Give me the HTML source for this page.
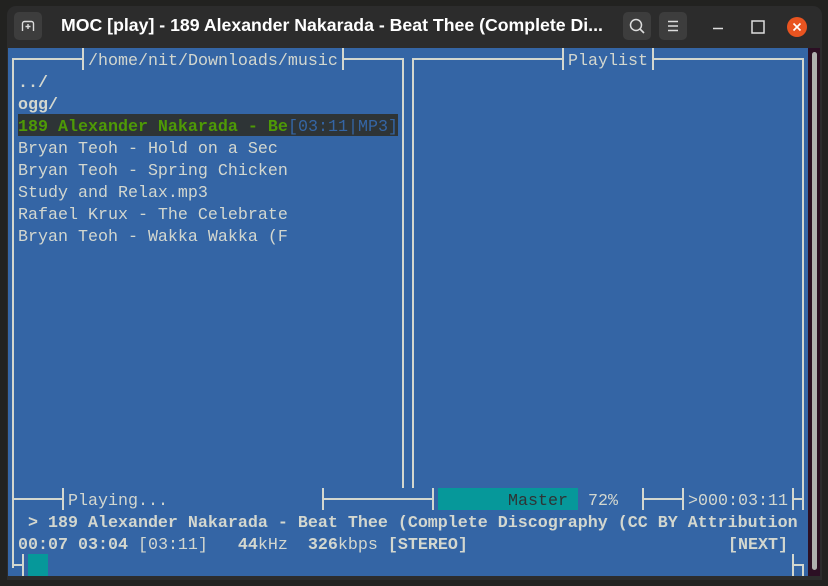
<!DOCTYPE html>
<html><head><meta charset="utf-8"><style>
*{margin:0;padding:0;box-sizing:border-box}
body{width:828px;height:586px;background:#222220;position:relative;overflow:hidden;font-family:"Liberation Mono",monospace}
#win{position:absolute;left:7px;top:6px;width:815px;height:574px;background:#2c2c2c;border-radius:9px 9px 0 0}
#term{position:absolute;left:8px;top:48px;width:800px;height:528px;background:#3465a5}
#sb{position:absolute;left:808px;top:48px;width:12px;height:528px;background:#2c0f24}
#thumb{position:absolute;left:812px;top:52px;width:5px;height:518px;background:#b0b0b0;border-radius:3px}
.t{position:absolute;font-size:16.67px;line-height:22px;color:#d3d7cf;white-space:pre;height:22px;margin-top:3px}
.b{font-weight:bold}
.h{position:absolute;height:2px;background:#d3d7cf}
.v{position:absolute;width:2px;background:#d3d7cf}
.btn{position:absolute;top:12px;width:28px;height:28px;background:#3d3d3d;border-radius:5px}
#title{position:absolute;left:61px;top:15px;color:#fff;font:bold 17.7px "Liberation Sans",sans-serif;white-space:nowrap}
</style></head><body>
<div id="win"></div>
<div class="btn" style="left:14px"><svg width="28" height="28"><path d="M8.5 19V11.5a2 2 0 0 1 2-2h7a2 2 0 0 1 2 2V19M14 12v5M11.5 14.5h5" stroke="#ddd" stroke-width="1.4" fill="none"/></svg></div>
<div id="title">MOC [play] - 189 Alexander Nakarada - Beat Thee (Complete Di...</div>
<div class="btn" style="left:623px"><svg width="28" height="28"><circle cx="13" cy="13" r="5.5" stroke="#ddd" stroke-width="1.5" fill="none"/><path d="M17 17l4 4" stroke="#ddd" stroke-width="1.6"/></svg></div>
<div class="btn" style="left:659px"><svg width="28" height="28"><path d="M9 9.5h10M9 14h10M9 18.5h10" stroke="#ddd" stroke-width="1.4"/></svg></div>
<svg style="position:absolute;left:708px;top:17px" width="20" height="20"><path d="M5 11.5h10" stroke="#ddd" stroke-width="1.5"/></svg>
<svg style="position:absolute;left:748px;top:17px" width="20" height="20"><rect x="4" y="4" width="12" height="12" stroke="#ddd" stroke-width="1.5" fill="none"/></svg>
<svg style="position:absolute;left:786px;top:16px" width="22" height="22"><circle cx="11" cy="11" r="10" fill="#e95420"/><path d="M7.5 7.5l7 7M14.5 7.5l-7 7" stroke="#fff" stroke-width="1.6"/></svg>
<div id="term"></div><div id="sb"></div><div id="thumb"></div>

<div class="h" style="left:12px;top:58px;width:72px"></div>
<div class="h" style="left:342px;top:58px;width:62px"></div>
<div class="h" style="left:412px;top:58px;width:152px"></div>
<div class="h" style="left:652px;top:58px;width:152px"></div>
<div class="v" style="left:82px;top:48px;height:22px"></div>
<div class="v" style="left:342px;top:48px;height:22px"></div>
<div class="v" style="left:562px;top:48px;height:22px"></div>
<div class="v" style="left:652px;top:48px;height:22px"></div>
<div class="v" style="left:12px;top:58px;height:510px"></div>
<div class="v" style="left:402px;top:58px;height:430px"></div>
<div class="v" style="left:412px;top:58px;height:430px"></div>
<div class="v" style="left:802px;top:58px;height:452px"></div>
<div class="h" style="left:12px;top:498px;width:52px"></div>
<div class="v" style="left:62px;top:488px;height:22px"></div>
<div class="v" style="left:322px;top:488px;height:22px"></div>
<div class="h" style="left:322px;top:498px;width:112px"></div>
<div class="v" style="left:432px;top:488px;height:22px"></div>
<div class="v" style="left:642px;top:488px;height:22px"></div>
<div class="h" style="left:642px;top:498px;width:42px"></div>
<div class="v" style="left:682px;top:488px;height:22px"></div>
<div class="v" style="left:792px;top:488px;height:22px"></div>
<div class="h" style="left:792px;top:498px;width:12px"></div>
<div class="h" style="left:12px;top:564px;width:12px"></div>
<div class="v" style="left:22px;top:554px;height:22px"></div>
<div class="v" style="left:792px;top:554px;height:22px"></div>
<div class="h" style="left:792px;top:564px;width:12px"></div>
<div class="v" style="left:802px;top:564px;height:12px"></div>
<div style="position:absolute;left:28px;top:554px;width:20px;height:22px;background:#06989a"></div>

<div class="t" style="left:88px;top:48px">/home/nit/Downloads/music</div>
<div class="t" style="left:568px;top:48px">Playlist</div>
<div class="t b" style="left:18px;top:70px">../</div>
<div class="t b" style="left:18px;top:92px">ogg/</div>
<div style="position:absolute;left:18px;top:114px;width:380px;height:22px;background:#2e3436"></div>
<div class="t b" style="left:18px;top:114px;color:#4e9a06">189 Alexander Nakarada - Be</div>
<div class="t" style="left:288px;top:114px;color:#3465a4">[03:11|MP3]</div>
<div class="t" style="left:18px;top:136px">Bryan Teoh - Hold on a Sec</div>
<div class="t" style="left:18px;top:158px">Bryan Teoh - Spring Chicken</div>
<div class="t" style="left:18px;top:180px">Study and Relax.mp3</div>
<div class="t" style="left:18px;top:202px">Rafael Krux - The Celebrate</div>
<div class="t" style="left:18px;top:224px">Bryan Teoh - Wakka Wakka (F</div>

<div class="t" style="left:68px;top:488px">Playing...</div>
<div style="position:absolute;left:438px;top:488px;width:140px;height:22px;background:#06989a"></div>
<div class="t" style="left:508px;top:488px;color:#2e3436">Master</div>
<div class="t" style="left:588px;top:488px">72%</div>
<div class="t" style="left:688px;top:488px">&gt;000:03:11</div>
<div class="t b" style="left:18px;top:510px"> &gt; 189 Alexander Nakarada - Beat Thee (Complete Discography (CC BY Attribution</div>
<div class="t" style="left:18px;top:532px"><span class="b">00:07 03:04 </span>[03:11]   <span class="b">44</span>kHz  <span class="b">326</span>kbps <span class="b">[STEREO]</span></div>
<div class="t b" style="left:728px;top:532px">[NEXT]</div>
</body></html>
